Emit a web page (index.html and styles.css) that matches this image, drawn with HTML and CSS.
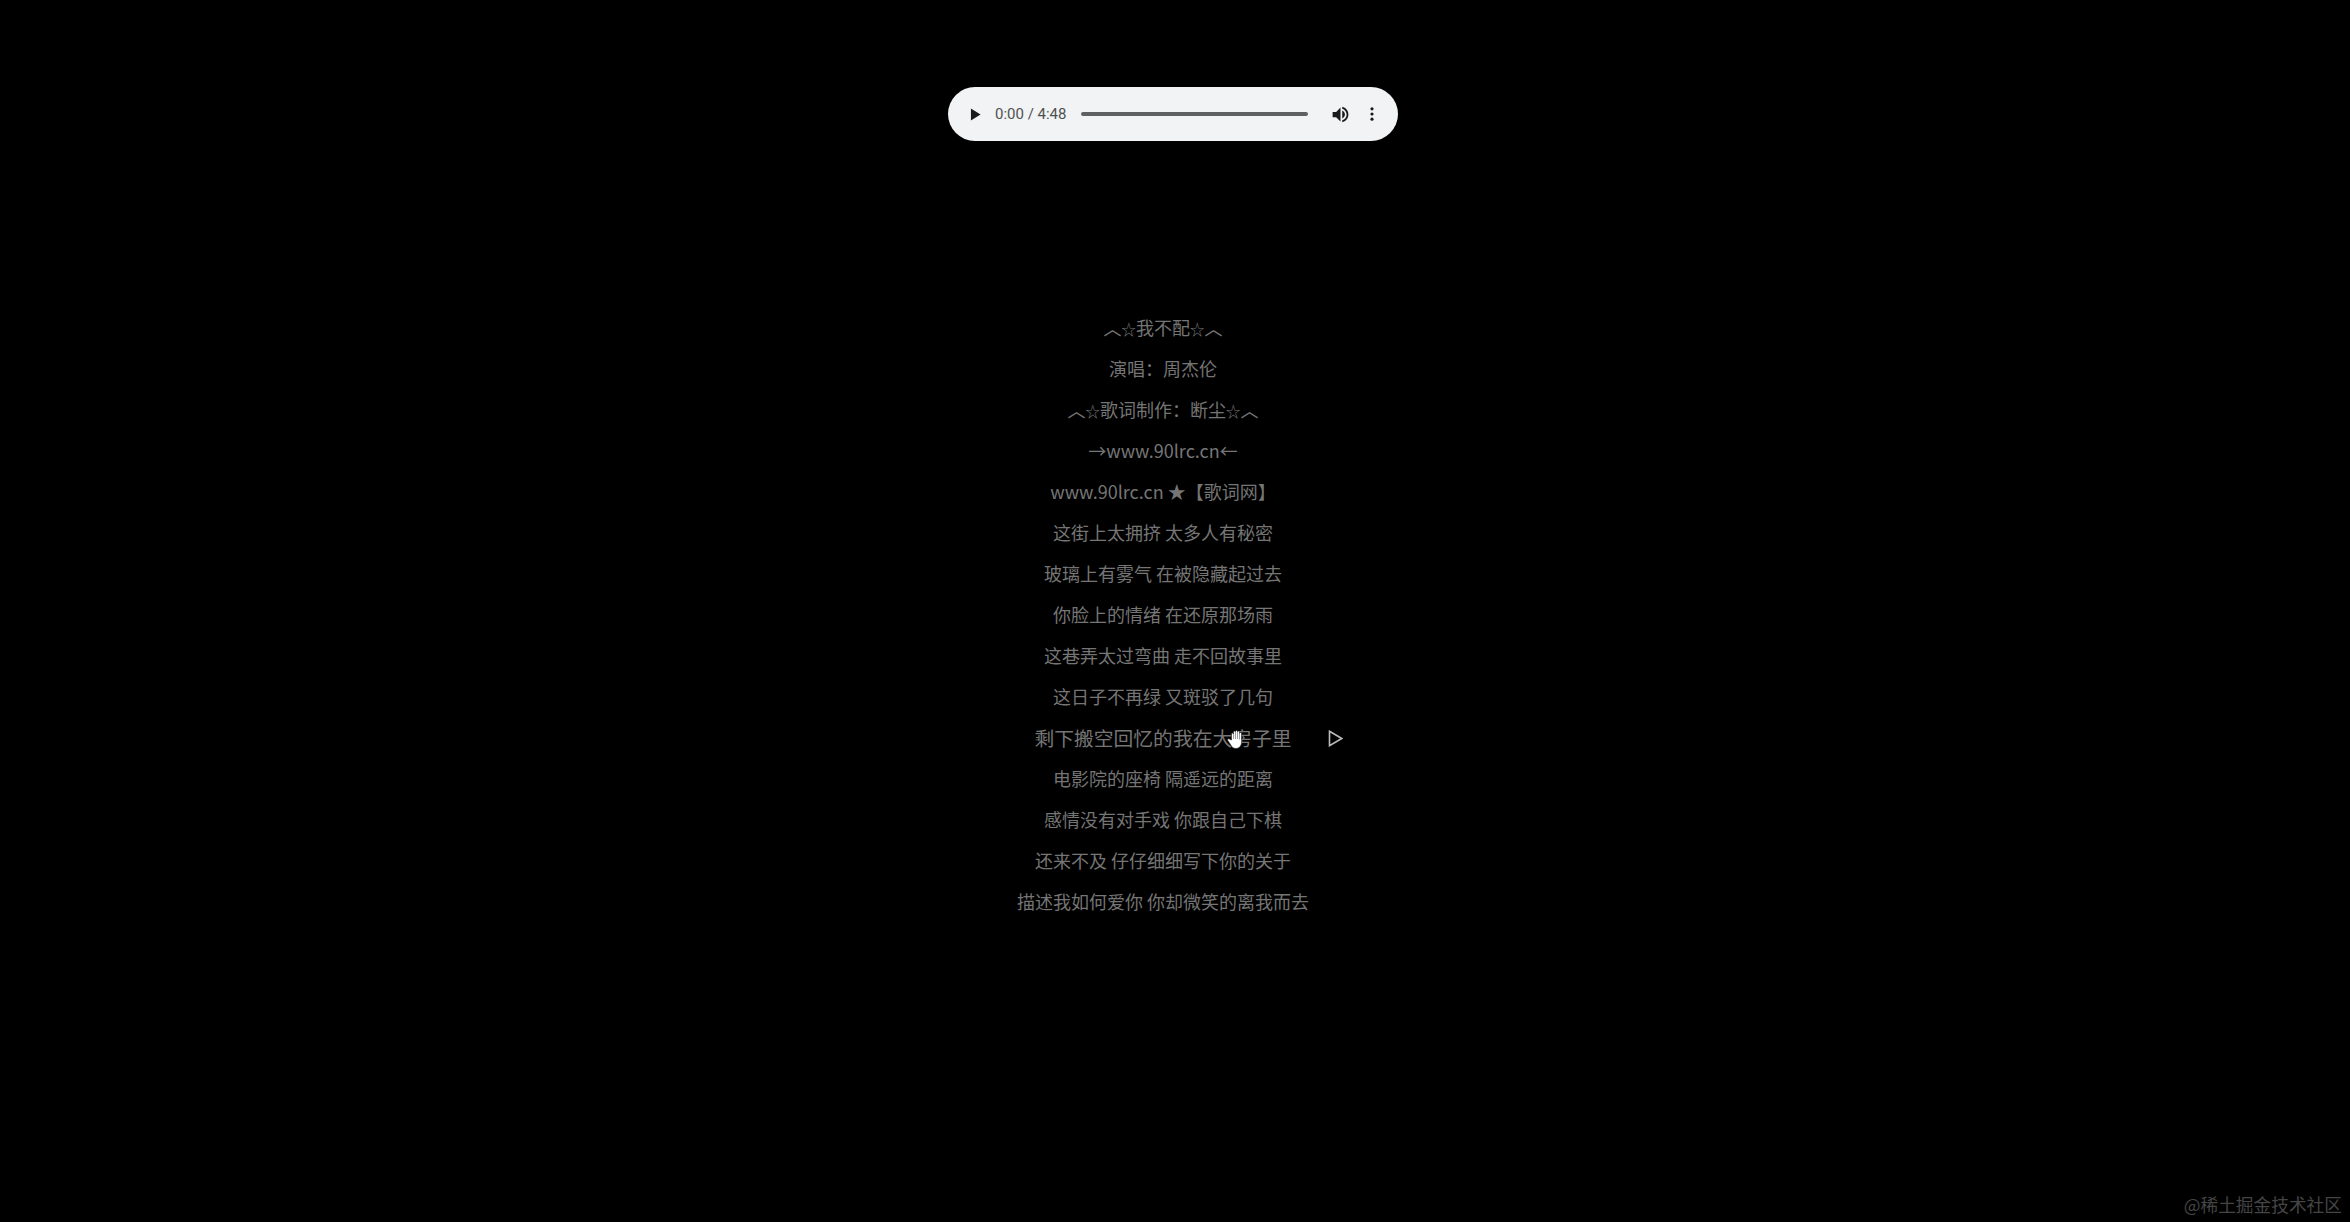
FILE: index.html
```html
<!DOCTYPE html>
<html lang="zh-CN">
<head>
<meta charset="utf-8">
<title>我不配</title>
<link rel="stylesheet" href="styles.css">
</head>
<body>
<main class="page">
  <div class="player">
    <svg class="play" viewBox="0 0 12 14"><path d="M1 0.5 L11.5 7 L1 13.5 Z"/></svg>
    <span class="time">0:00 / 4:48</span>
    <div class="track"></div>
    <svg class="volume" viewBox="0 0 24 24"><path d="M3 9v6h4l5 5V4L7 9H3z"/><path d="M14 7.500c1.800.9 3 2.500 3 4.500s-1.200 3.600-3 4.500z"/><path d="M14 3.200v2.100c2.900.9 5 3.600 5 6.700s-2.100 5.800-5 6.700v2.100c4-.9 7-4.500 7-8.800s-3-7.900-7-8.800z"/></svg>
    <svg class="more" viewBox="0 0 6 20"><circle cx="3" cy="3.500" r="2"/><circle cx="3" cy="10" r="2"/><circle cx="3" cy="16.500" r="2"/></svg>
  </div>
  <ul class="lyrics">
    <li>︿<span class="star">☆</span>我不配<span class="star">☆</span>︿</li>
    <li>演唱：周杰伦</li>
    <li>︿<span class="star">☆</span>歌词制作：断尘<span class="star">☆</span>︿</li>
    <li>→www.90lrc.cn←</li>
    <li>www.90lrc.cn ★【歌词网】</li>
    <li>这街上太拥挤 太多人有秘密</li>
    <li>玻璃上有雾气 在被隐藏起过去</li>
    <li>你脸上的情绪 在还原那场雨</li>
    <li>这巷弄太过弯曲 走不回故事里</li>
    <li>这日子不再绿 又斑驳了几句</li>
    <li class="active"><span class="active-text">剩下搬空回忆的我在大房子里</span>
      <svg class="cue" viewBox="0 0 15 17"><path d="M1.500 1.300 L13.800 8.500 L1.500 15.700 Z"/></svg>
      <svg class="hand" viewBox="0 0 18 20"><path d="M5.500 11V5a1 1 0 0 1 2 0V3a1 1 0 0 1 2 0v-.5a1 1 0 0 1 2 0V3a1 1 0 0 1 2 0v1.500a1 1 0 0 1 2 0V13c0 3.500-2 6.500-5.500 6.500-3 0-4-1.500-5.500-4L1.800 11.500c-.8-1.200.8-2.300 1.800-1.300z"/><path class="finger" d="M7.500 5v5M9.500 3v7M11.500 3v7M13.500 4.500v6"/></svg>
    </li>
    <li>电影院的座椅 隔遥远的距离</li>
    <li>感情没有对手戏 你跟自己下棋</li>
    <li>还来不及 仔仔细细写下你的关于</li>
    <li>描述我如何爱你 你却微笑的离我而去</li>
  </ul>
  <div class="watermark">@稀土掘金技术社区</div>
</main>
</body>
</html>
```
FILE: styles.css
```css
* { box-sizing: border-box; }
html, body { margin: 0; height: 100%; background: #000; }
.page {
  position: relative;
  height: 1222px;
  overflow: hidden;
  padding-top: 87px;
  font-family: "Noto Sans CJK SC", "Liberation Sans", sans-serif;
}
.player {
  display: flex;
  align-items: center;
  width: 450px;
  height: 54px;
  margin: 0 auto;
  transform: translateX(-2px);
  padding: 0 22px;
  border-radius: 27px;
  background: #f1f3f4;
}
.play { width: 11px; height: 13px; fill: #1a1a1a; flex: none; }
.time {
  width: 70px;
  margin-left: 14px;
  font: 400 15px Roboto, sans-serif;
  color: #505050;
  white-space: nowrap;
}
.track {
  flex: none;
  width: 227px;
  height: 4.500px;
  margin-left: 16px;
  border-radius: 2px;
  background: #5f6061;
}
.volume { width: 21px; height: 21px; margin-left: 22px; fill: #1a1a1a; flex: none; }
.more { width: 6px; height: 16px; margin-left: 18px; fill: #1a1a1a; flex: none; }
.lyrics {
  list-style: none;
  margin: 166px 0 0;
  padding: 0 24px 0 0;
  text-align: center;
  font-size: 18px;
  line-height: 41px;
  color: #757575;
}
.lyrics li { height: 41px; }
.star { font-size: 14.500px; }
.active { position: relative; }
.active-text { font-size: 19.800px; }
.cue {
  position: absolute;
  left: 1328px;
  top: 13px;
  width: 15px;
  height: 17px;
  fill: none;
  stroke: #bbb;
  stroke-width: 1.600;
}
.hand {
  position: absolute;
  left: 1226px;
  top: 12px;
  width: 18px;
  height: 20px;
  fill: #fff;
  stroke: #222;
  stroke-width: 0.600;
}
.hand .finger { fill: none; stroke: #777; stroke-width: 0.700; }
.watermark {
  position: absolute;
  right: 8px;
  bottom: 6px;
  font-size: 17.700px;
  line-height: 24px;
  color: #454545;
}
```
